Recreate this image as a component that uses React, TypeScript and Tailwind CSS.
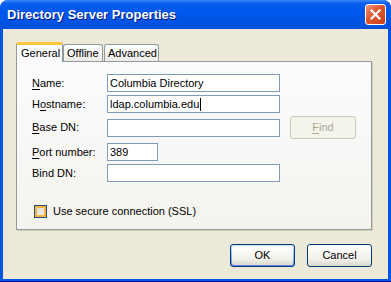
import React from "react";

const Field = ({ w, text, caret }: { w: string; text?: string; caret?: boolean }) => (
  <div className={`${w} h-[18px] border border-[#7F9DB9] bg-white flex items-center pl-[2px] overflow-hidden whitespace-nowrap`}>
    <span>{text}</span>
    {caret && <span className="inline-block w-px h-[13px] bg-black ml-[1px]" />}
  </div>
);

const Label = ({ u, rest, pre }: { u: string; rest: string; pre?: string }) => (
  <div className="w-[75px] whitespace-nowrap">
    {pre}
    <span className="underline underline-offset-[2px]">{u}</span>
    {rest}
  </div>
);

export default function App() {
  return (
    <div className="w-[391px] h-[282px] bg-[#0055E5] rounded-t-[8px] flex flex-col font-['Liberation_Sans',Arial,sans-serif] text-[11px] text-black border-b border-[#00138C]">
      {/* Title bar */}
      <div className="h-[29px] shrink-0 flex items-center justify-between pl-[7px] pr-[5px] rounded-t-[8px] bg-[linear-gradient(to_bottom,#3D8AF7_0%,#0A5EF0_12%,#0058EE_30%,#0055E5_70%,#004FDA_100%)]">
        <span className="text-white font-bold text-[13px] [text-shadow:1px_1px_0_#0A1883]">Directory Server Properties</span>
        <div className="w-[21px] h-[21px] rounded-[3px] border border-white bg-[linear-gradient(135deg,#F0987A_0%,#E0552E_45%,#C7401A_100%)] flex items-center justify-center">
          <svg width="13" height="13" viewBox="0 0 13 13">
            <path d="M2.5 2.5 L10.5 10.5 M10.5 2.5 L2.5 10.5" stroke="white" strokeWidth="2.2" strokeLinecap="square" />
          </svg>
        </div>
      </div>
      {/* Client */}
      <div className="flex-1 ml-[3px] mr-[3px] mb-[2px] bg-[#ECE9D8] flex flex-col pl-[13px] pt-[13px]">
        {/* Tabs */}
        <div className="flex items-end h-[19px] relative z-10">
          <div className="w-[47px] h-[20px] -mb-px bg-[#FCFCFE] border-x border-[#919B9C] rounded-t-[3px] border-t-[3px] border-t-[#FFC83C] flex items-center pl-[4px] pb-[1px]">
            General
          </div>
          <div className="w-[40px] h-[17px] bg-[linear-gradient(to_bottom,#FFFFFF,#ECEBE6)] border border-b-0 border-[#919B9C] rounded-t-[3px] flex items-center pl-[3px]">
            Offline
          </div>
          <div className="w-[55px] h-[17px] ml-px bg-[linear-gradient(to_bottom,#FFFFFF,#ECEBE6)] border border-b-0 border-[#919B9C] rounded-t-[3px] flex items-center pl-[3px]">
            Advanced
          </div>
        </div>
        {/* Panel */}
        <div className="w-[356px] h-[169px] border border-[#919B9C] shadow-[1px_1px_0_#D0CEBF] bg-[linear-gradient(to_bottom,#FCFCFE,#F4F3EE)] pl-[15px] pt-[12px] flex flex-col">
          <div className="flex items-center h-[18px]">
            <Label u="N" rest="ame:" />
            <Field w="w-[173px]" text="Columbia Directory" />
          </div>
          <div className="flex items-center h-[18px] mt-[3px]">
            <Label pre="H" u="o" rest="stname:" />
            <Field w="w-[173px]" text="ldap.columbia.edu" caret />
          </div>
          <div className="flex items-center h-[23px] mt-[3px]">
            <Label u="B" rest="ase DN:" />
            <Field w="w-[173px]" />
            <div className="ml-[10px] w-[66px] h-[23px] rounded-[3px] border border-[#C9C7BA] bg-[#F5F4EA] text-[#ACA899] flex items-center justify-center">
              <span>
                <span className="underline underline-offset-[2px]">F</span>ind
              </span>
            </div>
          </div>
          <div className="flex items-center h-[18px] mt-[4px]">
            <Label u="P" rest="ort number:" />
            <Field w="w-[51px]" text="389" />
          </div>
          <div className="flex items-center h-[18px] mt-[3px]">
            <Label u="" rest="Bind DN:" />
            <Field w="w-[173px]" />
          </div>
          <div className="flex items-center mt-[21px] ml-[2px]">
            <div className="w-[13px] h-[13px] border border-[#1C5180] bg-[#F8B33A] p-[2px]">
              <div className="w-full h-full bg-[linear-gradient(135deg,#DCDCD7,#F0EFEA)]" />
            </div>
            <span className="ml-[6px]">Use secure connection (SSL)</span>
          </div>
        </div>
        {/* Buttons */}
        <div className="w-[356px] flex justify-end gap-[12px] mt-[14px]">
          <div className="w-[65px] h-[23px] rounded-[3px] border border-[#003C74] p-px bg-[linear-gradient(to_bottom,#CEE7FF,#6982EE)]">
            <div className="w-full h-full rounded-[2px] bg-[linear-gradient(to_bottom,#FFFFFF,#F0F0EA_70%,#DCD8CC)] flex items-center justify-center">
              OK
            </div>
          </div>
          <div className="w-[65px] h-[23px] rounded-[3px] border border-[#003C74] bg-[linear-gradient(to_bottom,#FFFFFF,#F0F0EA_70%,#DCD8CC)] flex items-center justify-center">
            Cancel
          </div>
        </div>
      </div>
    </div>
  );
}
